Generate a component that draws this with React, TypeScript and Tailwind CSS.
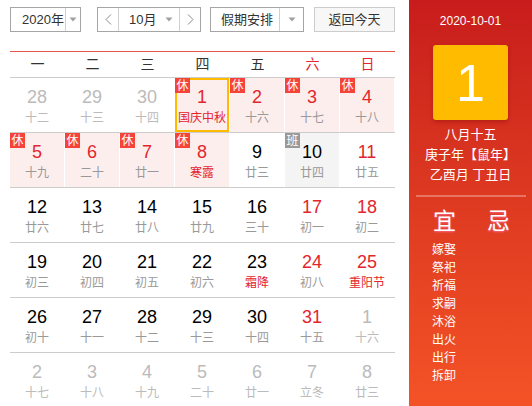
type Day = {
  n: number;
  l: string;
  out?: boolean;
  red?: boolean;
  fest?: boolean;
  badge?: '休' | '班';
  today?: boolean;
};

const weeks: Day[][] = [
  [
    { n: 28, l: '十二', out: true },
    { n: 29, l: '十三', out: true },
    { n: 30, l: '十四', out: true },
    { n: 1, l: '国庆中秋', red: true, fest: true, badge: '休', today: true },
    { n: 2, l: '十六', red: true, badge: '休' },
    { n: 3, l: '十七', red: true, badge: '休' },
    { n: 4, l: '十八', red: true, badge: '休' },
  ],
  [
    { n: 5, l: '十九', red: true, badge: '休' },
    { n: 6, l: '二十', red: true, badge: '休' },
    { n: 7, l: '廿一', red: true, badge: '休' },
    { n: 8, l: '寒露', red: true, fest: true, badge: '休' },
    { n: 9, l: '廿三' },
    { n: 10, l: '廿四', badge: '班' },
    { n: 11, l: '廿五', red: true },
  ],
  [
    { n: 12, l: '廿六' },
    { n: 13, l: '廿七' },
    { n: 14, l: '廿八' },
    { n: 15, l: '廿九' },
    { n: 16, l: '三十' },
    { n: 17, l: '初一', red: true },
    { n: 18, l: '初二', red: true },
  ],
  [
    { n: 19, l: '初三' },
    { n: 20, l: '初四' },
    { n: 21, l: '初五' },
    { n: 22, l: '初六' },
    { n: 23, l: '霜降', fest: true },
    { n: 24, l: '初八', red: true },
    { n: 25, l: '重阳节', red: true, fest: true },
  ],
  [
    { n: 26, l: '初十' },
    { n: 27, l: '十一' },
    { n: 28, l: '十二' },
    { n: 29, l: '十三' },
    { n: 30, l: '十四' },
    { n: 31, l: '十五', red: true },
    { n: 1, l: '十六', out: true },
  ],
  [
    { n: 2, l: '十七', out: true },
    { n: 3, l: '十八', out: true },
    { n: 4, l: '十九', out: true },
    { n: 5, l: '二十', out: true },
    { n: 6, l: '廿一', out: true },
    { n: 7, l: '立冬', out: true },
    { n: 8, l: '廿三', out: true },
  ],
];

const yi = ['嫁娶', '祭祀', '祈福', '求嗣', '沐浴', '出火', '出行', '拆卸'];

function Caret() {
  return (
    <svg width="8" height="5" viewBox="0 0 8 5">
      <path d="M0.5 0.5 L7.5 0.5 L4 4.5 Z" fill="#a0a0a0" />
    </svg>
  );
}

function Chevron({ right }: { right?: boolean }) {
  return (
    <svg width="7" height="11" viewBox="0 0 7 11">
      <path
        d={right ? 'M1 0.5 L6 5.5 L1 10.5' : 'M6 0.5 L1 5.5 L6 10.5'}
        fill="none"
        stroke="#888"
        strokeWidth="1"
      />
    </svg>
  );
}

function Cell({ d }: { d: Day }) {
  let bg = 'bg-white';
  if (d.badge === '休') bg = 'bg-[#fdeeee]';
  if (d.badge === '班') bg = 'bg-[#f4f4f4]';

  let numColor = 'text-black';
  if (d.red) numColor = 'text-[#e3262d]';
  if (d.out) numColor = 'text-[#bbbbbb]';

  let lunarColor = 'text-[#999999]';
  if (d.fest) lunarColor = 'text-[#e3262d]';
  if (d.out) lunarColor = 'text-[#bbbbbb]';

  return (
    <div className={`relative flex h-[54px] w-[55px] flex-col items-center border-r border-white pt-[9px] ${bg}`}>
      {d.today && (
        <div className="absolute top-0 bottom-0 left-0 right-0 border-2 border-[#ffbb00]" />
      )}
      {d.badge && (
        <div
          className={`absolute top-0 left-0 z-10 flex h-[15px] w-[15px] items-center justify-center text-[12px] leading-none text-white ${
            d.badge === '休' ? 'bg-[#f5433a]' : 'bg-[#999999]'
          }`}
        >
          {d.badge}
        </div>
      )}
      <div className={`text-[18px] leading-[20px] ${numColor}`}>{d.n}</div>
      <div className={`mt-[4px] text-[12px] leading-[14px] ${lunarColor}`}>{d.l}</div>
    </div>
  );
}

export default function App() {
  return (
    <div
      className="flex h-[406px] w-[532px] overflow-hidden bg-white text-[#333]"
      style={{ fontFamily: '"Liberation Sans", Arial, "Noto Sans CJK SC", sans-serif' }}
    >
      {/* Calendar */}
      <div className="w-[409px] shrink-0 pl-[10px] pr-[14px]">
        <div className="flex h-[32px] items-start pt-[7px] text-[13px]">
          <div className="flex h-[25px] w-[71px] border border-[#a5a5a5]">
            <div className="flex w-[54px] items-center pl-[11px]">2020年</div>
            <div className="flex flex-1 items-center justify-center border-l border-[#d0d0d0]">
              <Caret />
            </div>
          </div>

          <div className="ml-[16px] flex h-[25px] w-[104px] border border-[#a5a5a5]">
            <div className="flex w-[21px] items-center justify-center border-r border-[#d0d0d0]">
              <Chevron />
            </div>
            <div className="flex w-[60px] items-center pl-[10px]">
              <span>10月</span>
              <span className="ml-[9px] flex">
                <Caret />
              </span>
            </div>
            <div className="flex flex-1 items-center justify-center border-l border-[#d0d0d0]">
              <Chevron right />
            </div>
          </div>

          <div className="ml-[9px] flex h-[25px] w-[94px] border border-[#a5a5a5]">
            <div className="flex w-[68px] items-center pl-[10px]">假期安排</div>
            <div className="flex flex-1 items-center justify-center border-l border-[#d0d0d0]">
              <Caret />
            </div>
          </div>

          <div className="ml-[10px] flex h-[25px] w-[81px] items-center justify-center border border-[#cccccc] bg-[#f7f7f7]">
            返回今天
          </div>
        </div>

        <div className="mt-[19px] border-t border-[#e8554a]">
          <div className="grid h-[26px] grid-cols-7 border-b border-[#cccccc] text-[14px] leading-[25px]">
            {['一', '二', '三', '四', '五', '六', '日'].map((w, i) => (
              <div key={w} className={`text-center ${i > 4 ? 'text-[#e3262d]' : 'text-[#333]'}`}>
                {w}
              </div>
            ))}
          </div>
          {weeks.map((wk, i) => (
            <div key={i} className="flex border-b border-[#cccccc]">
              {wk.map((d, j) => (
                <Cell key={j} d={d} />
              ))}
            </div>
          ))}
        </div>
      </div>

      {/* Side panel */}
      <div className="flex flex-1 flex-col items-center bg-gradient-to-b from-[#c81c1c] to-[#f45226] text-white">
        <div className="mt-[14px] text-[12px] leading-[14px]">2020-10-01</div>
        <div className="mt-[17px] flex h-[75px] w-[75px] items-center justify-center rounded-[3px] bg-[#ffbb00] text-[52px] leading-none shadow-[0_2px_4px_rgba(120,0,0,0.35)]">
          1
        </div>
        <div className="mt-[5px] text-center text-[13px] leading-[20px]">
          <div>八月十五</div>
          <div>庚子年【鼠年】</div>
          <div>乙酉月 丁丑日</div>
        </div>
        <div className="mt-[10px] h-[2px] w-[110px] bg-white/30" />
        <div className="flex w-full pl-[23px]">
          <div className="flex flex-col">
            <div className="mt-[11px] pl-[1px] text-[23px] leading-[26px] [text-shadow:0_1px_2px_rgba(255,120,180,0.8)]">
              宜
            </div>
            <div className="mt-[7px] text-[12px] leading-[18px]">
              {yi.map((t) => (
                <div key={t}>{t}</div>
              ))}
            </div>
          </div>
          <div className="ml-[31px] mt-[11px] text-[23px] leading-[26px] [text-shadow:0_1px_2px_rgba(255,120,180,0.8)]">
            忌
          </div>
        </div>
      </div>
    </div>
  );
}
